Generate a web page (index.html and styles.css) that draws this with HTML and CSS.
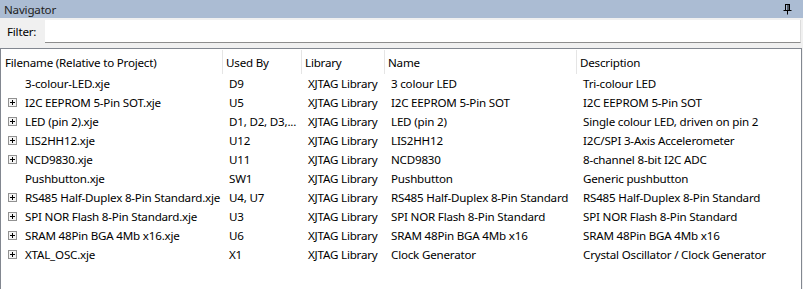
FILE: index.html
```html
<!DOCTYPE html>
<html lang="en">
<head>
    <meta charset="UTF-8">
    <title>Navigator</title>
    <link rel="stylesheet" href="styles.css">
</head>
<body>

    <div class="panel">
        <div class="titlebar">
            <span class="title">Navigator</span>
            <svg class="pin" width="9" height="11" viewBox="0 0 9 11">
                <path d="M2 0.5h5M2.5 0.5v6M6.5 0.5v6M5 0.5v6M0.5 6.5h8M4.5 6.5v4" stroke="#000" stroke-width="1" fill="none"/>
            </svg>
        </div>

        <div class="filter">
            <label>Filter:</label>
            <input type="text" class="filter-input">
        </div>

        <div class="list">
            <div class="row header">
                <div class="cell">Filename (Relative to Project)</div>
                <div class="cell">Used By</div>
                <div class="cell">Library</div>
                <div class="cell">Name</div>
                <div class="cell last">Description</div>
            </div>

            <div class="row">
                <div class="cell file"><span class="no-box"></span>3-colour-LED.xje</div>
                <div class="cell">D9</div>
                <div class="cell">XJTAG Library</div>
                <div class="cell">3 colour LED</div>
                <div class="cell">Tri-colour LED</div>
            </div>
            <div class="row">
                <div class="cell file"><span class="box"></span>I2C EEPROM 5-Pin SOT.xje</div>
                <div class="cell">U5</div>
                <div class="cell">XJTAG Library</div>
                <div class="cell">I2C EEPROM 5-Pin SOT</div>
                <div class="cell">I2C EEPROM 5-Pin SOT</div>
            </div>
            <div class="row">
                <div class="cell file"><span class="box"></span>LED (pin 2).xje</div>
                <div class="cell">D1, D2, D3,...</div>
                <div class="cell">XJTAG Library</div>
                <div class="cell">LED (pin 2)</div>
                <div class="cell">Single colour LED, driven on pin 2</div>
            </div>
            <div class="row">
                <div class="cell file"><span class="box"></span>LIS2HH12.xje</div>
                <div class="cell">U12</div>
                <div class="cell">XJTAG Library</div>
                <div class="cell">LIS2HH12</div>
                <div class="cell">I2C/SPI 3-Axis Accelerometer</div>
            </div>
            <div class="row">
                <div class="cell file"><span class="box"></span>NCD9830.xje</div>
                <div class="cell">U11</div>
                <div class="cell">XJTAG Library</div>
                <div class="cell">NCD9830</div>
                <div class="cell">8-channel 8-bit I2C ADC</div>
            </div>
            <div class="row">
                <div class="cell file"><span class="no-box"></span>Pushbutton.xje</div>
                <div class="cell">SW1</div>
                <div class="cell">XJTAG Library</div>
                <div class="cell">Pushbutton</div>
                <div class="cell">Generic pushbutton</div>
            </div>
            <div class="row">
                <div class="cell file"><span class="box"></span>RS485 Half-Duplex 8-Pin Standard.xje</div>
                <div class="cell">U4, U7</div>
                <div class="cell">XJTAG Library</div>
                <div class="cell">RS485 Half-Duplex 8-Pin Standard</div>
                <div class="cell">RS485 Half-Duplex 8-Pin Standard</div>
            </div>
            <div class="row">
                <div class="cell file"><span class="box"></span>SPI NOR Flash 8-Pin Standard.xje</div>
                <div class="cell">U3</div>
                <div class="cell">XJTAG Library</div>
                <div class="cell">SPI NOR Flash 8-Pin Standard</div>
                <div class="cell">SPI NOR Flash 8-Pin Standard</div>
            </div>
            <div class="row">
                <div class="cell file"><span class="box"></span>SRAM 48Pin BGA 4Mb x16.xje</div>
                <div class="cell">U6</div>
                <div class="cell">XJTAG Library</div>
                <div class="cell">SRAM 48Pin BGA 4Mb x16</div>
                <div class="cell">SRAM 48Pin BGA 4Mb x16</div>
            </div>
            <div class="row">
                <div class="cell file"><span class="box"></span>XTAL_OSC.xje</div>
                <div class="cell">X1</div>
                <div class="cell">XJTAG Library</div>
                <div class="cell">Clock Generator</div>
                <div class="cell">Crystal Oscillator / Clock Generator</div>
            </div>
        </div>
    </div>

</body>
</html>
```

FILE: styles.css
```css
body {
    margin: 0;
    font-family: "Noto Sans", sans-serif;
    font-size: 11.6px;
    letter-spacing: -0.2px;
    color: #000;
    background-color: #f0f0f0;
}
.panel {
    width: 803px;
    height: 289px;
    overflow: hidden;
}
.titlebar {
    height: 18px;
    background: #abbcd3;
    display: flex;
    align-items: center;
    justify-content: space-between;
    padding: 0 11px 0 4px;
    color: #1e1e1e;
}
.pin {
    margin-top: 1px;
}
.filter {
    height: 30px;
    display: flex;
    align-items: flex-start;
    padding: 2px 2px 0 7px;
    box-sizing: border-box;
}
.filter label {
    width: 38px;
    line-height: 22px;
    margin-top: 1px;
}
.filter-input {
    flex: 1;
    height: 23px;
    box-sizing: border-box;
    margin: 0;
    padding: 0;
    border: none;
    border-bottom: 1px solid #8d8d8d;
    border-right: 1px solid #dcdcdc;
    background: white;
}
.list {
    margin-right: 1px;
    height: 260px;
    background: white;
    border: 1px solid #828790;
}
.row {
    display: grid;
    grid-template-columns: 222px 79px 83px 192px 1fr;
    height: 19px;
    align-items: center;
}
.row .cell {
    padding-left: 6px;
    white-space: nowrap;
    overflow: hidden;
}
.row .file {
    padding-left: 7px;
    display: flex;
    align-items: center;
}
.header {
    height: 25px;
    align-items: stretch;
}
.header .cell {
    padding-left: 4px;
    display: flex;
    align-items: center;
    border-right: 1px solid #e5e5e5;
    margin: 1px 0 0 0;
}
.header .cell.last {
    border-right: none;
}
.header .cell:not(:first-child) {
    margin-left: -1px;
    padding-left: 4px;
}
.box, .no-box {
    width: 9px;
    height: 9px;
    margin-right: 8px;
    flex-shrink: 0;
    box-sizing: border-box;
}
.box {
    border: 1px solid #919191;
    background:
        linear-gradient(#000, #000) center / 5px 1px no-repeat,
        linear-gradient(#000, #000) center / 1px 5px no-repeat,
        #f4f4f4;
}
```
